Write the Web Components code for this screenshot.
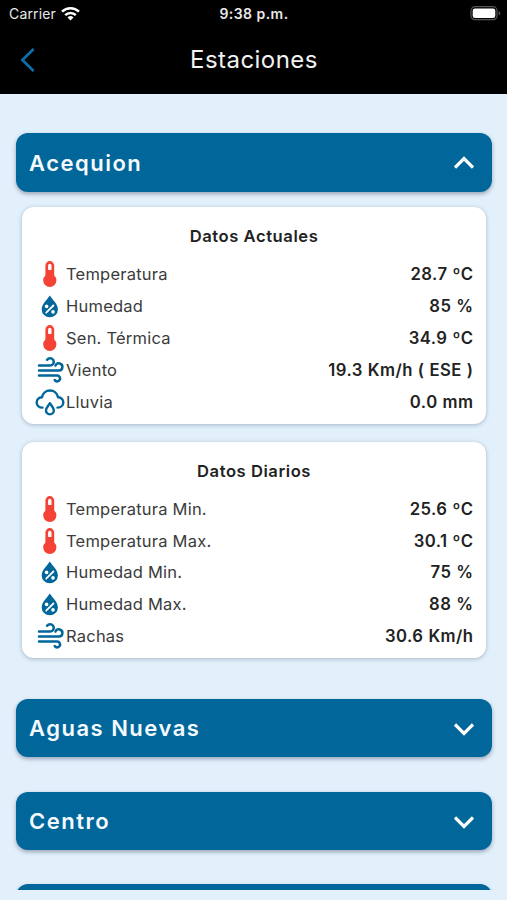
<!DOCTYPE html>
<html lang="es">
<head>
<meta charset="utf-8">
<meta name="viewport" content="width=device-width, initial-scale=1">
<title>Estaciones</title>
<style>
  html, body{
    height: 100%;
    margin: 0;
  }
  body{
    background: #e2f0fb;
    font-family: Inter, "Liberation Sans", sans-serif;
    color: #222;
    overflow: hidden;
  }
</style>
</head>
<body>

<!-- Phone screen: fixed bars on top, clipped list under them -->
<template id="app-screen">
  <style>
    :host{
      display: flex;
      flex-direction: column;
      height: 100vh;
      box-sizing: border-box;
      padding-bottom: 10px;
    }
    .list{
      flex: 1;
      min-height: 0;
      overflow: hidden;
      padding: 39.6px 15px 0 15.5px;
      display: flex;
      flex-direction: column;
      gap: 34.4px;
    }
  </style>
  <slot name="top"></slot>
  <div class="list"><slot></slot></div>
</template>

<template id="status-bar">
  <style>
    :host{
      display: grid;
      grid-template-columns: 1fr auto 1fr;
      align-items: center;
      height: 27px;
      padding: 0 6px 0 9px;
      background: #000;
      color: #e8e8e8;
      font-size: 14px;
      line-height: 27px;
    }
    .carrier{
      display: flex;
      align-items: center;
      gap: 5px;
      letter-spacing: 0.15px;
    }
    .time{
      font-weight: 600;
      letter-spacing: 0.45px;
      margin-right: 2px;
    }
    .battery{
      justify-self: end;
    }
    svg{
      display: block;
    }
  </style>
  <div class="carrier">
    <slot></slot>
    <svg width="19" height="14" viewBox="0 0 19 14" fill="none" stroke="#fff" stroke-width="2.5">
      <path d="M1 4.700a12.200 12.200 0 0 1 17 0"/>
      <path d="M4.200 8.100a7.600 7.600 0 0 1 10.600 0"/>
      <path d="M9.500 13.500l-3-3a4.300 4.300 0 0 1 6 0z" fill="#fff" stroke="none"/>
    </svg>
  </div>
  <div class="time"><slot name="time"></slot></div>
  <svg class="battery" width="31" height="15" viewBox="0 0 31 15">
    <rect x="1" y="0.7" width="26" height="13" rx="4" fill="none" stroke="#555" stroke-width="1.2"/>
    <rect x="2.7" y="2.4" width="22.6" height="9.6" rx="2.3" fill="#fff"/>
    <path d="M28.6 5v4.5q1.7-.8 1.7-2.25T28.6 5z" fill="#555"/>
  </svg>
</template>

<template id="nav-bar">
  <style>
    :host{
      display: grid;
      grid-template-columns: 60px 1fr 60px;
      align-items: center;
      height: 66.5px;
      background: #000;
      color: #f2f2f2;
    }
    svg{
      display: block;
      margin-left: 20px;
    }
    .title{
      text-align: center;
      font-size: 24px;
      line-height: 66px;
      letter-spacing: 0.45px;
      padding-left: 1px;
    }
  </style>
  <svg width="16" height="24" viewBox="0 0 16 24" fill="none" stroke="#066fa8" stroke-width="2.7">
    <path d="M13.6 1L2.4 12l11.2 11"/>
  </svg>
  <div class="title"><slot></slot></div>
</template>

<template id="station-panel">
  <style>
    :host{
      display: block;
      flex: none;
    }
    .head{
      display: flex;
      align-items: center;
      justify-content: space-between;
      height: 58.5px;
      box-sizing: border-box;
      padding: 0 18px 0 13.5px;
      border-radius: 12px;
      background: #01669a;
      color: #f4faff;
      font-size: 22px;
      font-weight: 600;
      letter-spacing: 1.5px;
      box-shadow: 0 2px 4px rgba(40,50,80,0.4);
    }
    .name{
      padding-top: 1px;
    }
    svg{
      display: block;
      margin-top: 2px;
    }
    :host([open]) svg{
      transform: rotate(180deg);
    }
    .body{
      display: none;
    }
    :host([open]) .body{
      display: flex;
      flex-direction: column;
      gap: 18px;
      padding: 15.5px 6px 6.2px 6px;
    }
  </style>
  <div class="head">
    <span class="name"></span>
    <svg width="20" height="14" viewBox="0 0 20 14" fill="none" stroke="#fff" stroke-width="3.2">
      <path d="M1 2.5l9 9 9-9"/>
    </svg>
  </div>
  <div class="body"><slot></slot></div>
</template>

<template id="data-card">
  <style>
    :host{
      display: block;
      height: 216.5px;
      box-sizing: border-box;
      padding: 6px 12.5px 0 13px;
      border-radius: 12px;
      background: #fff;
      box-shadow: 0 1px 4px rgba(40,60,90,0.32);
    }
    .title{
      height: 45.4px;
      line-height: 46.4px;
      text-align: center;
      font-size: 16.6px;
      font-weight: 600;
      letter-spacing: 0.55px;
    }
  </style>
  <div class="title"></div>
  <slot></slot>
</template>

<template id="data-row">
  <style>
    :host{
      display: flex;
      align-items: center;
      height: 31.8px;
      font-size: 16.5px;
    }
    .icon{
      width: 30px;
      height: 28px;
      margin-right: 1.5px;
    }
    .icon svg{
      display: block;
    }
    .label{
      flex: 1;
      color: #3b3b3b;
      letter-spacing: 0.22px;
    }
    .value{
      font-size: 16.7px;
      font-weight: 600;
      letter-spacing: 0.45px;
      word-spacing: 0.3px;
    }
  </style>
  <div class="icon"></div>
  <div class="label"></div>
  <div class="value"><slot></slot></div>
</template>

<app-screen>
  <status-bar slot="top">Carrier<span slot="time">9:38 p.m.</span></status-bar>
  <nav-bar slot="top">Estaciones</nav-bar>

  <station-panel name="Acequion" open>
    <data-card title-text="Datos Actuales">
      <data-row icon="temp" label="Temperatura">28.7 ºC</data-row>
      <data-row icon="drop" label="Humedad">85 %</data-row>
      <data-row icon="temp" label="Sen. Térmica">34.9 ºC</data-row>
      <data-row icon="wind" label="Viento">19.3 Km/h ( ESE )</data-row>
      <data-row icon="rain" label="Lluvia">0.0 mm</data-row>
    </data-card>
    <data-card title-text="Datos Diarios">
      <data-row icon="temp" label="Temperatura Min.">25.6 ºC</data-row>
      <data-row icon="temp" label="Temperatura Max.">30.1 ºC</data-row>
      <data-row icon="drop" label="Humedad Min.">75 %</data-row>
      <data-row icon="drop" label="Humedad Max.">88 %</data-row>
      <data-row icon="wind" label="Rachas">30.6 Km/h</data-row>
    </data-card>
  </station-panel>
  <station-panel name="Aguas Nuevas"></station-panel>
  <station-panel name="Centro"></station-panel>
  <station-panel></station-panel>
</app-screen>

<script>
// all icons share a 30x28 box, the glyph is centered on x=15
const ICONS = {
  temp: `<path fill="#f44336" fill-rule="evenodd" d="M10.4 5.5a4.4 4.4 0 0 1 8.8 0v9.9a6.6 6.6 0 1 1-8.8 0zM13.1 5.5v4.6h3.4V5.5a1.7 1.7 0 0 0-3.4 0z"/>`,
  drop: `<path fill="#01669a" d="M14.8 3.6C17.5 7.9 22.9 12.2 22.9 17.4a8.1 7.9 0 0 1-16.2 0C6.7 12.2 12.1 7.9 14.8 3.6z"/>
    <path d="M11.2 20.7l7.2-7.2" stroke="#fff" stroke-width="1.8" stroke-linecap="round"/>
    <circle cx="11.6" cy="14.4" r="1.8" fill="#fff"/>
    <circle cx="18" cy="19.9" r="1.8" fill="#fff"/>`,
  wind: `<g fill="none" stroke="#01669a" stroke-width="2.5" stroke-linecap="round" stroke-linejoin="round">
      <path d="M4 9.6h11.3a3.7 3.7 0 1 0-3.2-5.9"/>
      <path d="M4 14.6h20a3.6 3.6 0 1 0-3.5-5"/>
      <path d="M4 19.6h18.3a2.9 2.9 0 1 1-2.6 4.4"/>
    </g>`,
  rain: `<g fill="none" stroke="#01669a" stroke-width="2.4" stroke-linecap="round" stroke-linejoin="round">
      <path d="M7.5 19.6C3.9 19.6 1.7 17.1 1.7 14.4S3.8 9.4 7 9.2C7.7 5.2 11 2.5 15 2.5s7.3 2.7 8 6.7c3.2.2 5.3 2.6 5.3 5.2s-2.2 5.2-5.8 5.2"/>
      <path d="M14.9 15.2c1.7 2.5 3.9 4.5 3.9 7.3a3.9 3.9 0 0 1-7.8 0c0-2.8 2.2-4.8 3.9-7.3z"/>
    </g>`,
};

class BaseElement extends HTMLElement {
  constructor() {
    super();
    const shadow = this.attachShadow({mode: 'open'});
    const tpl = document.getElementById(this.localName);
    shadow.appendChild(tpl.content.cloneNode(true));
  }
  $(sel) {
    return this.shadowRoot.querySelector(sel);
  }
}

class AppScreen extends BaseElement {}
class StatusBar extends BaseElement {}
class NavBar extends BaseElement {}

class StationPanel extends BaseElement {
  connectedCallback() {
    this.$('.name').textContent = this.getAttribute('name') || '';
    this.$('.head').addEventListener('click', () => {
      this.toggleAttribute('open');
    });
  }
}

class DataCard extends BaseElement {
  connectedCallback() {
    this.$('.title').textContent = this.getAttribute('title-text');
  }
}

class DataRow extends BaseElement {
  connectedCallback() {
    const icon = ICONS[this.getAttribute('icon')];
    this.$('.icon').innerHTML = `<svg width="30" height="28" viewBox="0 0 30 28">${icon}</svg>`;
    this.$('.label').textContent = this.getAttribute('label');
  }
}

customElements.define('app-screen', AppScreen);
customElements.define('status-bar', StatusBar);
customElements.define('nav-bar', NavBar);
customElements.define('station-panel', StationPanel);
customElements.define('data-card', DataCard);
customElements.define('data-row', DataRow);
</script>
</body>
</html>
